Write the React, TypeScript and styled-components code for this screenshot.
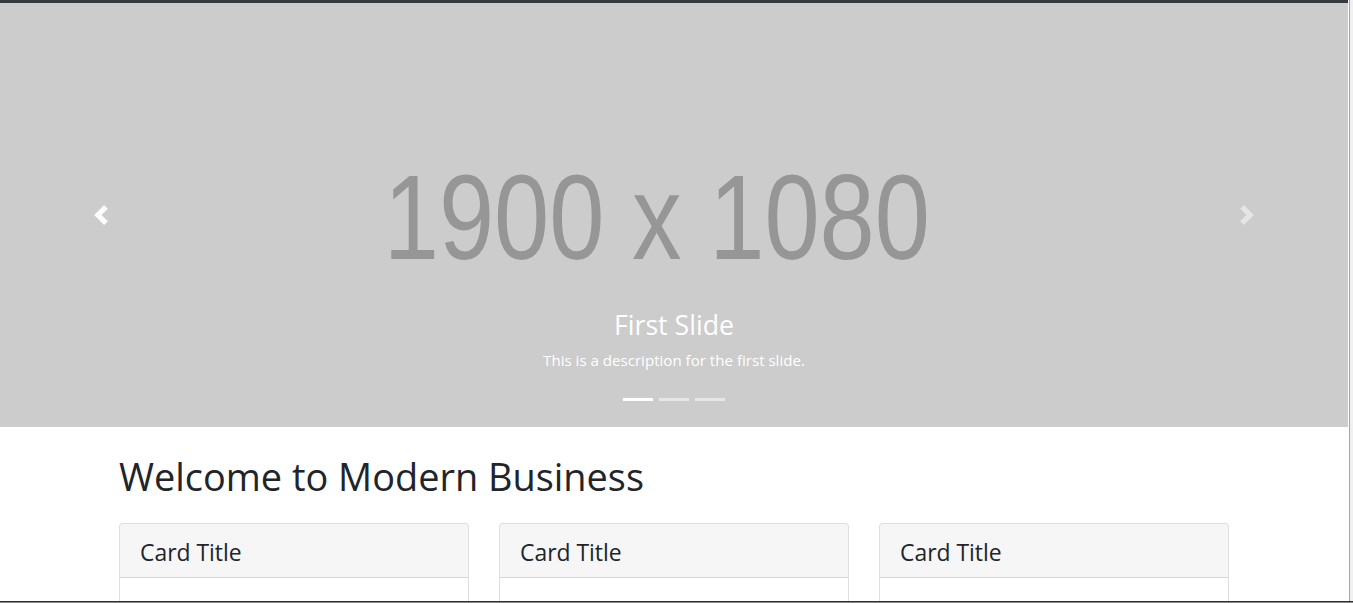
import React from "react";
import styled, { createGlobalStyle } from "styled-components";

const Global = createGlobalStyle`
  html, body { margin: 0; padding: 0; overflow: hidden; background: #fff; }
  body { font-family: "Open Sans", "Noto Sans", sans-serif; color: #212529; }
  * { box-sizing: border-box; }
`;

const Shell = styled.div`
  display: flex;
  width: 1353px;
  height: 603px;
  overflow: hidden;
  position: relative;
`;

const Page = styled.div`
  flex: 1;
  min-width: 0;
  display: flex;
  flex-direction: column;
`;

const Scrollbar = styled.div`
  width: 5px;
  flex: none;
  background: #f0f0f0;
  border-left: 1px solid #fff;
  box-shadow: inset 1px 0 0 #a6a6a6;
`;

const TopBar = styled.div`
  height: 3px;
  background: #343a40;
  flex: none;
`;

const Carousel = styled.div`
  position: relative;
  height: 424px;
  background: #ccc;
  display: flex;
  align-items: center;
  justify-content: center;
  flex: none;
  overflow: hidden;
`;

const Placeholder = styled.div`
  font-family: "Liberation Sans", Arial, sans-serif;
  font-size: 121px;
  line-height: 1;
  color: #969696;
  transform: scaleX(0.82) translate(-21px, 2px);
  white-space: nowrap;
`;

const Control = styled.div<{ $side: "left" | "right"; $active?: boolean }>`
  position: absolute;
  top: 0;
  bottom: 0;
  ${(p) => (p.$side === "left" ? "left: 0;" : "right: 0;")}
  width: 15%;
  display: flex;
  align-items: center;
  justify-content: center;
  opacity: ${(p) => (p.$active ? 0.95 : 0.5)};
  svg { width: 20px; height: 20px; }
`;

const Caption = styled.div`
  position: absolute;
  left: 15%;
  right: 15%;
  bottom: 20px;
  padding: 20px 0;
  text-align: center;
  color: #fff;
`;

const CaptionTitle = styled.h3`
  margin: 0 0 8px;
  font-size: 26.7px;
  font-weight: 400;
  line-height: 1.2;
`;

const CaptionText = styled.p`
  margin: 0 0 15px;
  font-size: 15.1px;
  line-height: 1.5;
`;

const Indicators = styled.ol`
  position: absolute;
  left: 0;
  right: 0;
  bottom: 26px;
  margin: 0;
  padding: 0;
  list-style: none;
  display: flex;
  justify-content: center;
`;

const Indicator = styled.li<{ $active?: boolean }>`
  width: 30px;
  height: 3px;
  margin: 0 3px;
  background: ${(p) => (p.$active ? "#fff" : "rgba(255,255,255,0.5)")};
`;

const Container = styled.div`
  width: 1140px;
  margin: 0 auto;
  padding: 0 15px;
`;

const Heading = styled.h1`
  margin: 24px 0;
  padding-top: 2px;
  font-size: 37.9px;
  font-weight: 400;
  line-height: 46px;
  color: #212529;
`;

const Row = styled.div`
  display: grid;
  grid-template-columns: repeat(3, 350px);
  column-gap: 30px;
`;

const Card = styled.div`
  border: 1px solid rgba(0, 0, 0, 0.125);
  border-radius: 4px;
  background: #fff;
  height: 200px;
  display: flex;
  flex-direction: column;
`;

const CardHeader = styled.div`
  background: rgba(0, 0, 0, 0.035);
  border-bottom: 1px solid rgba(0, 0, 0, 0.125);
  padding: 15px 20px 9px;
  border-radius: 3px 3px 0 0;
`;

const CardTitle = styled.h4`
  margin: 0;
  font-size: 22.9px;
  font-weight: 400;
  line-height: 28.8px;
`;

const CardBody = styled.div`
  flex: 1;
`;

const BottomEdge = styled.div`
  position: absolute;
  left: 0;
  right: 0;
  bottom: 0;
  height: 2px;
  background: #2e2e2e;
  border-bottom: 1px solid #8a8a8a;
`;

const Chevron = ({ dir }: { dir: "left" | "right" }) => (
  <svg viewBox="0 0 8 8" fill="#fff">
    {dir === "left" ? (
      <path d="M5.25 0l-4 4 4 4 1.5-1.5-2.5-2.5 2.5-2.5-1.5-1.5z" />
    ) : (
      <path d="M2.75 0l-1.5 1.5 2.5 2.5-2.5 2.5 1.5 1.5 4-4-4-4z" />
    )}
  </svg>
);

export default function App() {
  return (
    <>
      <Global />
      <Shell>
        <Page>
          <TopBar />
          <Carousel>
            <Placeholder>1900 x 1080</Placeholder>
            <Control $side="left" $active>
              <Chevron dir="left" />
            </Control>
            <Control $side="right">
              <Chevron dir="right" />
            </Control>
            <Caption>
              <CaptionTitle>First Slide</CaptionTitle>
              <CaptionText>This is a description for the first slide.</CaptionText>
            </Caption>
            <Indicators>
              <Indicator $active />
              <Indicator />
              <Indicator />
            </Indicators>
          </Carousel>
          <Container>
            <Heading>Welcome to Modern Business</Heading>
            <Row>
              {[0, 1, 2].map((i) => (
                <Card key={i}>
                  <CardHeader>
                    <CardTitle>Card Title</CardTitle>
                  </CardHeader>
                  <CardBody />
                </Card>
              ))}
            </Row>
          </Container>
        </Page>
        <Scrollbar />
        <BottomEdge />
      </Shell>
    </>
  );
}
